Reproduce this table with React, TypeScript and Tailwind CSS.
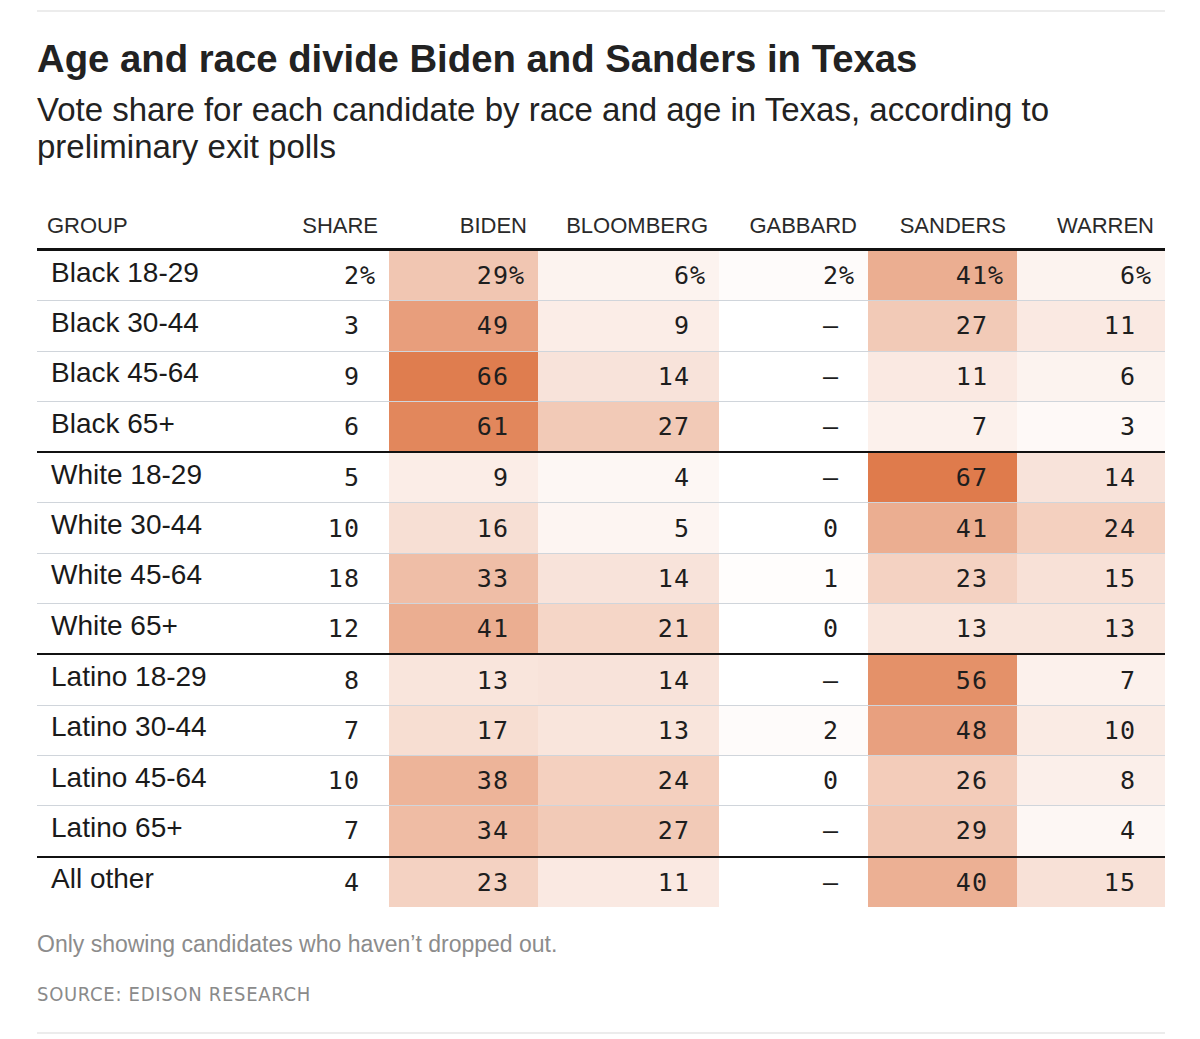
import React from 'react';

type Row = { group: string; values: (number | null)[] };

const rows: Row[] = [
  { group: 'Black 18-29', values: [2, 29, 6, 2, 41, 6] },
  { group: 'Black 30-44', values: [3, 49, 9, null, 27, 11] },
  { group: 'Black 45-64', values: [9, 66, 14, null, 11, 6] },
  { group: 'Black 65+', values: [6, 61, 27, null, 7, 3] },
  { group: 'White 18-29', values: [5, 9, 4, null, 67, 14] },
  { group: 'White 30-44', values: [10, 16, 5, 0, 41, 24] },
  { group: 'White 45-64', values: [18, 33, 14, 1, 23, 15] },
  { group: 'White 65+', values: [12, 41, 21, 0, 13, 13] },
  { group: 'Latino 18-29', values: [8, 13, 14, null, 56, 7] },
  { group: 'Latino 30-44', values: [7, 17, 13, 2, 48, 10] },
  { group: 'Latino 45-64', values: [10, 38, 24, 0, 26, 8] },
  { group: 'Latino 65+', values: [7, 34, 27, null, 29, 4] },
  { group: 'All other', values: [4, 23, 11, null, 40, 15] },
];

const columns = ['SHARE', 'BIDEN', 'BLOOMBERG', 'GABBARD', 'SANDERS', 'WARREN'];

const gridCols = 'grid grid-cols-[198px_154px_149px_181px_149px_149px_148px]';

// white -> deep orange, linear on the vote share
function heat(v: number | null) {
  if (v === null || v === 0) return '#ffffff';
  const t = Math.min(v / 67, 1);
  const mix = (a: number, b: number) => Math.round(a + (b - a) * t);
  return `rgb(${mix(255, 223)}, ${mix(255, 123)}, ${mix(255, 76)})`;
}

function ValueCell({ value, showPct, shaded }: { value: number | null; showPct: boolean; shaded: boolean }) {
  return (
    <div
      className="flex items-center justify-end pr-[13px] font-['DejaVu_Sans_Mono','Liberation_Mono',monospace] text-[25px] leading-none tracking-[1px] text-[#1e1e1e]"
      style={{ backgroundColor: shaded ? heat(value) : '#ffffff' }}
    >
      <span>{value === null ? '—' : value}</span>
      <span className={showPct ? '' : 'invisible'}>%</span>
    </div>
  );
}

export default function App() {
  return (
    <div className="min-h-screen bg-white font-['Liberation_Sans',Arial,sans-serif]">
      <div className="ml-[37px] w-[1128px] pt-[10px]">
        <div className="h-[2px] bg-[#ececec]" />

        <h1 className="mt-[25px] text-[38.3px] leading-[44px] font-bold text-[#222]">
          Age and race divide Biden and Sanders in Texas
        </h1>
        <p className="mt-[10px] text-[33px] leading-[37px] text-[#222]">
          Vote share for each candidate by race and age in Texas, according to preliminary exit polls
        </p>

        {/* header */}
        <div className={`${gridCols} mt-[49px] h-[34px] text-[22px] leading-[24px] text-[#2a2a2a]`}>
          <div className="pl-[10px]">GROUP</div>
          {columns.map((c) => (
            <div key={c} className="pr-[11px] text-right">
              {c}
            </div>
          ))}
        </div>
        <div className="h-[3px] bg-[#111]" />

        {rows.map((r, i) => {
          const groupStart = i === 4 || i === 8 || i === 12;
          const border = i === 0 ? '' : groupStart ? 'border-t-2 border-[#111]' : 'border-t border-[#d0d5db]';
          return (
            <div key={r.group} className={`${gridCols} h-[49.3px] box-content ${border}`}>
              <div className="flex items-center pl-[14px] pb-[6px] text-[28px] leading-none text-[#1a1a1a]">
                {r.group}
              </div>
              {r.values.map((v, j) => (
                <ValueCell key={j} value={v} showPct={i === 0} shaded={j !== 0} />
              ))}
            </div>
          );
        })}

        <p className="mt-[23px] text-[23px] leading-[28px] text-[#8c8c8c]">
          Only showing candidates who haven’t dropped out.
        </p>
        <p className="mt-[24px] font-['DejaVu_Sans','Liberation_Sans',sans-serif] font-stretch-condensed font-medium text-[20px] leading-[24px] tracking-[0.7px] text-[#8a8a8a]">
          SOURCE: EDISON RESEARCH
        </p>
        <div className="mt-[26px] h-[2px] bg-[#ececec]" />
      </div>
    </div>
  );
}
